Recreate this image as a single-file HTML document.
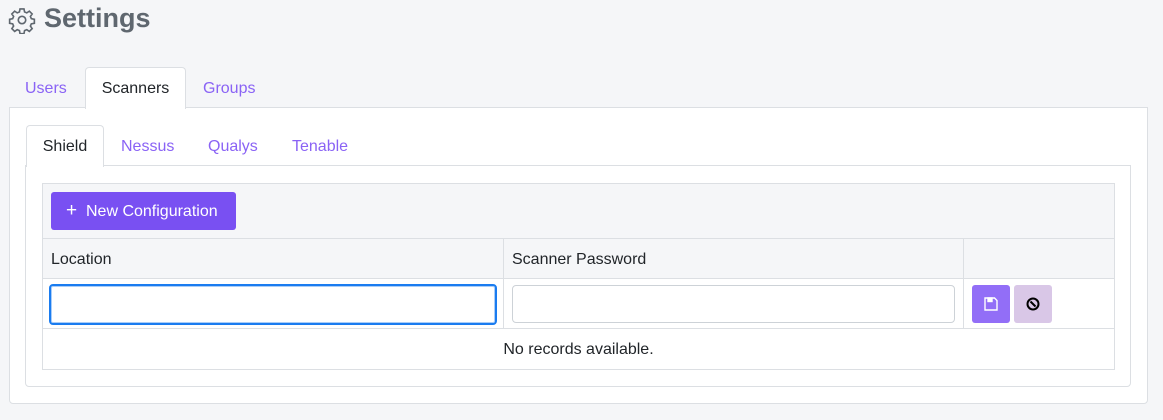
<!DOCTYPE html>
<html><head><meta charset="utf-8"><style>
*{box-sizing:border-box;margin:0;padding:0}
body{width:1163px;height:420px;background:#f5f6f8;font-family:"Liberation Sans",sans-serif;position:relative;overflow:hidden;color:#212529}
.a{position:absolute}
.tab{position:absolute;font-size:16px;color:#8a63f5}
.act{background:#fff;border:1px solid #dcdfe3;border-bottom:none;border-radius:4px 4px 0 0;color:#212529;text-align:center}
.bd{border:1px solid #dcdfe3}
.t{font-size:16px}
</style></head><body>
<svg class="a" style="left:8px;top:6px" width="28" height="28" viewBox="0 0 24 24" fill="none" stroke="#5f676f" stroke-width="1.4"><circle cx="12" cy="12" r="3.2"/><path d="M10.3 2.5h3.4l.5 2.6 1.9.8 2.2-1.5 2.4 2.4-1.5 2.2.8 1.9 2.6.5v3.4l-2.6.5-.8 1.9 1.5 2.2-2.4 2.4-2.2-1.5-1.9.8-.5 2.6h-3.4l-.5-2.6-1.9-.8-2.2 1.5-2.4-2.4 1.5-2.2-.8-1.9-2.6-.5v-3.4l2.6-.5.8-1.9-1.5-2.2 2.4-2.4 2.2 1.5 1.9-.8z"/></svg>
<div class="a" style="left:44px;top:3px;font-size:27px;font-weight:bold;color:#5f676f">Settings</div>

<div class="a bd" style="left:9px;top:107px;width:1139px;height:297px;background:#fff;border-radius:0 0 4px 4px"></div>
<div class="tab" style="left:25px;top:80px">Users</div>
<div class="tab act" style="left:85px;top:67px;width:101px;height:42px;line-height:41px">Scanners</div>
<div class="tab" style="left:203px;top:80px">Groups</div>

<div class="a bd" style="left:25px;top:165px;width:1106px;height:222px;border-radius:0 0 4px 4px"></div>
<div class="tab act" style="left:26px;top:125px;width:78px;height:42px;line-height:41px">Shield</div>
<div class="tab" style="left:121px;top:138px">Nessus</div>
<div class="tab" style="left:208px;top:138px">Qualys</div>
<div class="tab" style="left:292px;top:138px">Tenable</div>

<div class="a bd" style="left:42px;top:183px;width:1073px;height:187px;background:#fff"></div>
<div class="a" style="left:43px;top:184px;width:1071px;height:95px;background:#f5f6f8;border-bottom:1px solid #dcdfe3"></div>
<div class="a" style="left:43px;top:238px;width:1071px;height:1px;background:#dcdfe3"></div>
<div class="a" style="left:43px;top:328px;width:1071px;height:1px;background:#dcdfe3"></div>
<div class="a" style="left:503px;top:239px;width:1px;height:89px;background:#dcdfe3"></div>
<div class="a" style="left:963px;top:239px;width:1px;height:89px;background:#dcdfe3"></div>
<div class="a" style="left:51px;top:192px;width:185px;height:38px;background:#7950f2;border-radius:3px;color:#fff;font-size:16px;line-height:38px;padding-left:15px;white-space:nowrap"><span style="font-size:19px">+</span>&nbsp;&nbsp;New Configuration</div>
<div class="a t" style="left:51px;top:251px">Location</div>
<div class="a t" style="left:512px;top:251px">Scanner Password</div>
<div class="a" style="left:49px;top:284px;width:448px;height:41px;border:2px solid #1a7cf0;border-radius:4px;box-shadow:0 0 0 1px #a9cdf8 inset"></div>
<div class="a" style="left:512px;top:285px;width:443px;height:38px;border:1px solid #cdd2d7;border-radius:4px"></div>
<div class="a" style="left:972px;top:285px;width:38px;height:38px;background:#926ef7;border-radius:3px"></div>
<svg class="a" style="left:984px;top:297px" width="14" height="14" viewBox="0 0 14 14" fill="none" stroke="#fff" stroke-width="1.4"><path d="M1 1h9.5l2.5 2.5V13H1z"/><rect x="4" y="1" width="4" height="3.5" fill="#fff"/></svg>
<div class="a" style="left:1014px;top:285px;width:38px;height:38px;background:#d9c7e7;border-radius:3px"></div>
<svg class="a" style="left:1025px;top:296px" width="16" height="16" viewBox="0 0 16 16" fill="none" stroke="#000" stroke-width="2"><circle cx="8" cy="8" r="5.5"/><path d="M5.5 5.5l5 5"/></svg>
<div class="a t" style="left:43px;top:341px;width:1071px;text-align:center">No records available.</div>
</body></html>
